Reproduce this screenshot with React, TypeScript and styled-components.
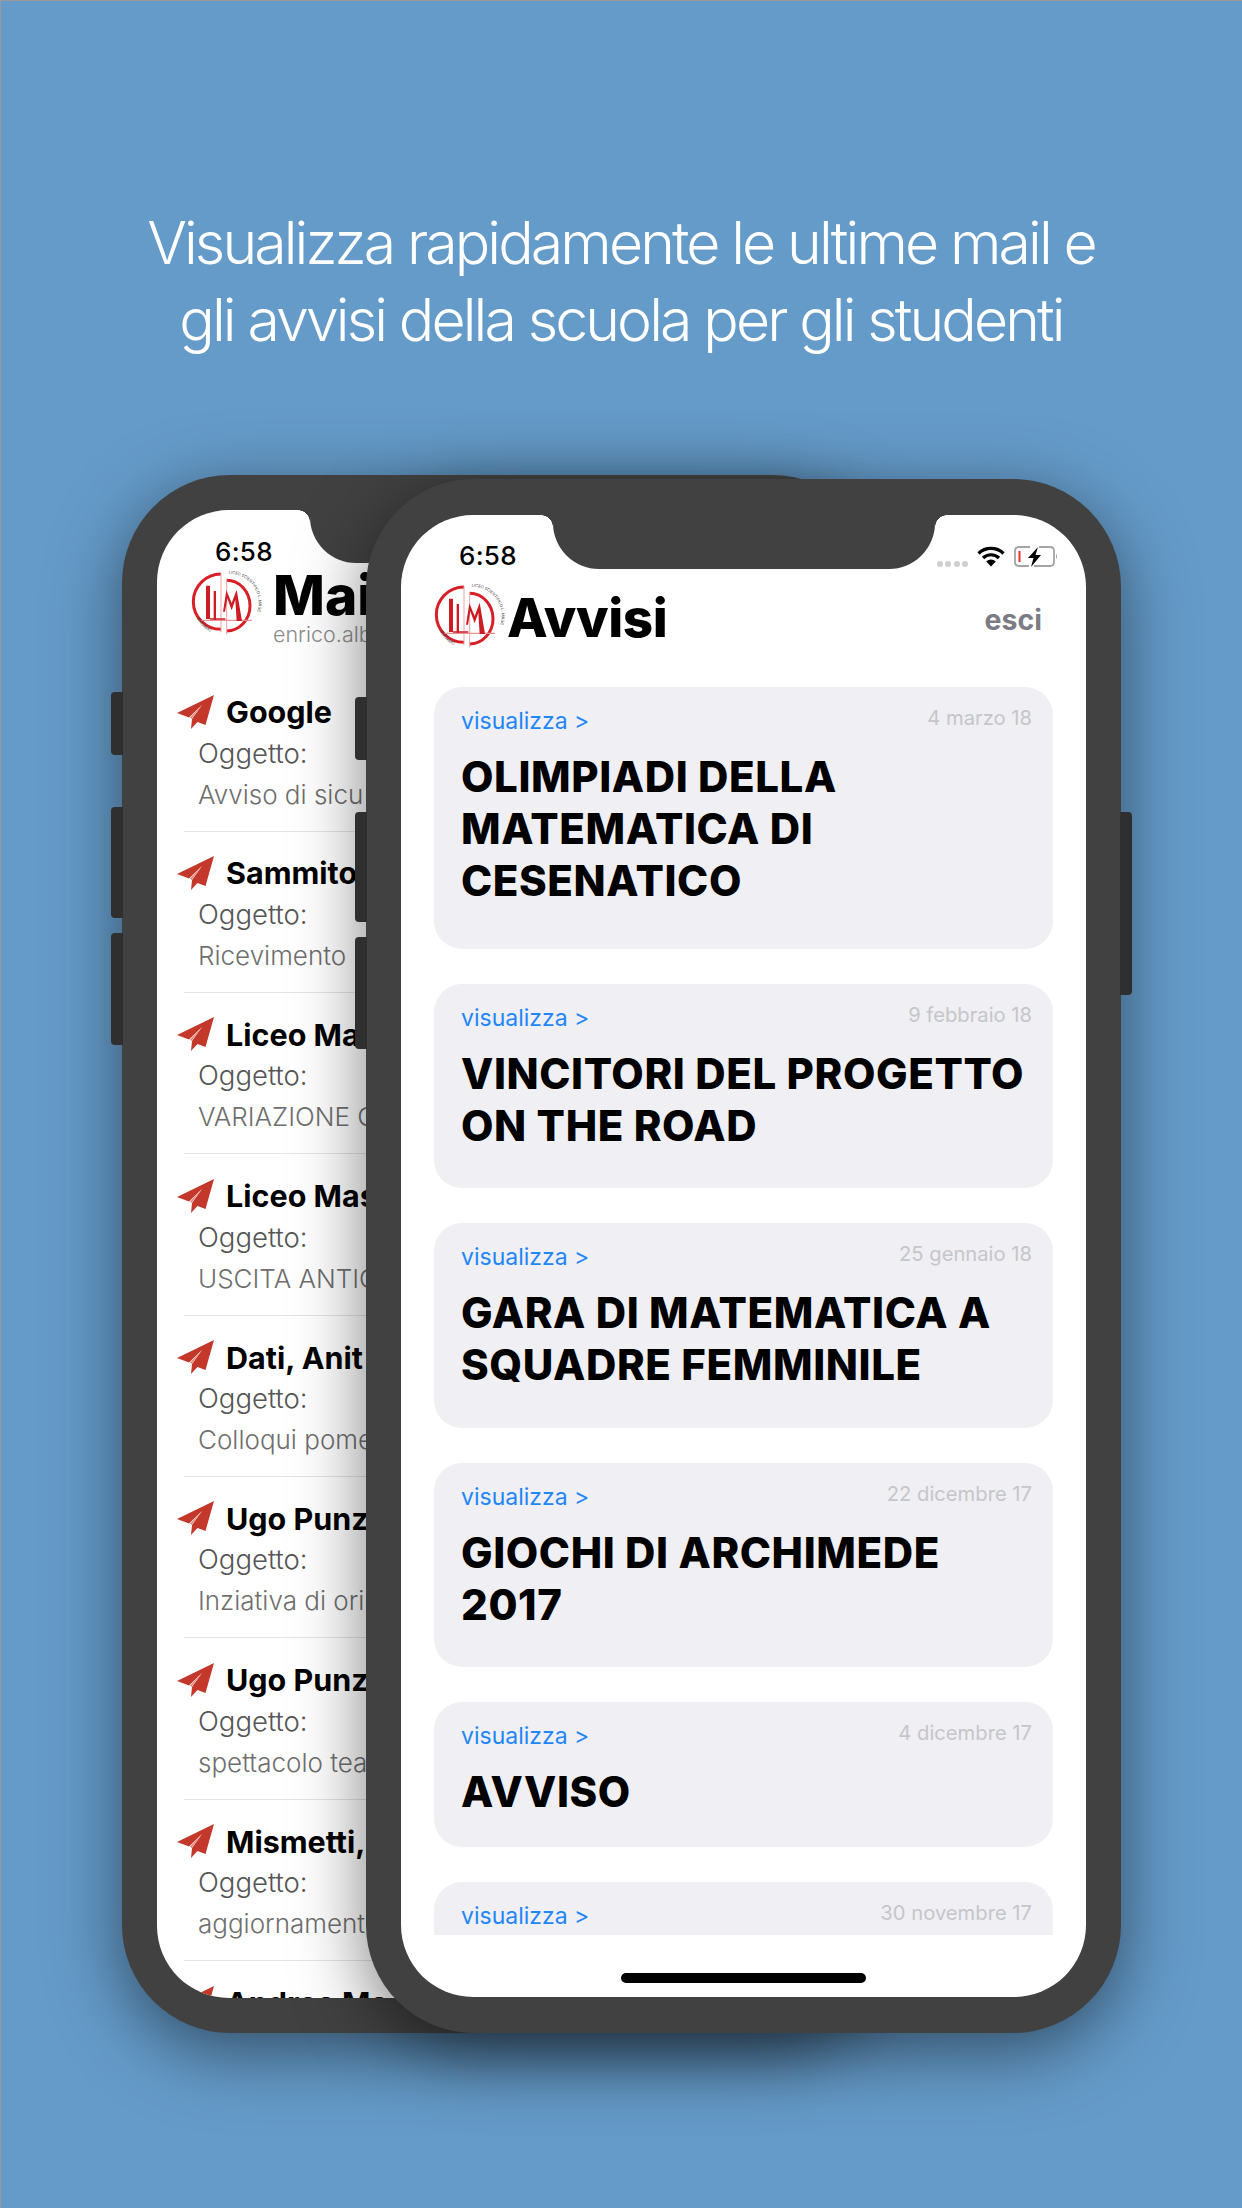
import styled, { createGlobalStyle } from 'styled-components'

const GlobalStyle = createGlobalStyle`
  html, body {
    margin: 0;
    padding: 0;
    background: #659bc9;
  }
  * {
    box-sizing: border-box;
  }
`

const Page = styled.div`
  width: 1242px;
  height: 2208px;
  overflow: hidden;
  background: #659bc9;
  box-shadow: inset 1px 1px 0 #9a9a9a;
  font-family: Inter, 'Noto Sans', sans-serif;
`

const Headline = styled.h1`
  margin: 0;
  padding-top: 204px;
  height: 475px;
  font-size: 59px;
  line-height: 77px;
  font-weight: 300;
  letter-spacing: -2.9px;
  color: #fff;
  text-align: center;
`

const Stage = styled.div`
  display: flex;
  align-items: flex-start;
  padding-left: 122px;
`

const Phone = styled.div<{ $front?: boolean }>`
  position: relative;
  flex: none;
  width: ${(p) => (p.$front ? '755px' : '758px')};
  height: ${(p) => (p.$front ? '1554px' : '1558px')};
  margin-left: ${(p) => (p.$front ? '-514px' : '0')};
  margin-top: ${(p) => (p.$front ? '4px' : '0')};
  padding: ${(p) => (p.$front ? '36px 35px' : '35px')};
  border-radius: 108px;
  background: #414141;
  box-shadow: 0 18px 70px rgba(0, 0, 0, 0.5);
`

const SideButton = styled.span<{ $top: number; $height: number; $right?: boolean }>`
  position: absolute;
  top: ${(p) => p.$top}px;
  height: ${(p) => p.$height}px;
  width: 12px;
  background: #2f2f2f;
  ${(p) =>
    p.$right
      ? 'right: -11px; border-radius: 0 4px 4px 0;'
      : 'left: -11px; border-radius: 4px 0 0 4px;'}
`

const Screen = styled.div`
  position: relative;
  display: flex;
  flex-direction: column;
  height: 100%;
  overflow: hidden;
  border-radius: 72px;
  background: #fff;
`

const Notch = styled.div<{ $left: number; $height: number }>`
  position: absolute;
  top: 0;
  left: ${(p) => p.$left}px;
  width: 382px;
  height: ${(p) => p.$height}px;
  background: #414141;
  border-radius: 0 0 46px 46px;

  &::before,
  &::after {
    content: '';
    position: absolute;
    top: 0;
    width: 12px;
    height: 12px;
  }
  &::before {
    left: -12px;
    background: radial-gradient(circle at 0 100%, transparent 11.5px, #414141 12px);
  }
  &::after {
    right: -12px;
    background: radial-gradient(circle at 100% 100%, transparent 11.5px, #414141 12px);
  }
`

const StatusBar = styled.div<{ $height: number; $top: number }>`
  position: relative;
  flex: none;
  display: flex;
  align-items: flex-start;
  justify-content: space-between;
  height: ${(p) => p.$height}px;
  padding: ${(p) => p.$top}px 28px 0 58px;
`

const Time = styled.span`
  font-size: 26px;
  line-height: 30px;
  font-weight: 500;
  letter-spacing: 0.3px;
  color: #000;
`

const StatusIcons = styled.div`
  display: flex;
  align-items: center;
  gap: 9px;
  margin-top: 5px;
`

const SignalDots = styled.div`
  display: flex;
  gap: 2.5px;
  margin-top: 14px;
`

const SignalDot = styled.span`
  width: 6px;
  height: 6px;
  border-radius: 50%;
  background: #cfcfcf;
`

const HeaderRow = styled.header`
  flex: none;
  display: flex;
  align-items: flex-start;
  height: 70px;
  padding-left: 30px;
`

const BrandTitle = styled.div`
  margin-top: 4px;
  font-size: 53px;
  line-height: 64px;
  font-weight: 800;
  letter-spacing: -0.4px;
  color: #000;
`

const Logout = styled.a`
  margin: 20px 44px 0 auto;
  font-size: 28.5px;
  line-height: 36px;
  font-weight: 700;
  color: #7c7c85;
`

const BackHeader = styled.header`
  flex: none;
  display: flex;
  align-items: flex-start;
  height: 122.5px;
  padding: 1px 0 0 31px;
`

const BackTitles = styled.div`
  margin: -1.5px 0 0 9px;
`

const BackTitle = styled.div`
  font-size: 55px;
  line-height: 55px;
  font-weight: 800;
  color: #000;
`

const BackSubtitle = styled.div`
  font-size: 21.5px;
  line-height: 23px;
  font-weight: 300;
  color: #8d8d8d;
  white-space: nowrap;
`

const MailList = styled.div`
  flex: 1;
  overflow: hidden;
  padding-left: 20px;
`

const MailRow = styled.div`
  height: 161.4px;
  white-space: nowrap;
`

const MailSender = styled.div`
  display: flex;
  align-items: center;
  gap: 12px;
  height: 42px;
  font-size: 30.5px;
  font-weight: 700;
  color: #000;
`

const MailLine = styled.div<{ $light?: boolean }>`
  height: 41px;
  padding-left: 21px;
  font-size: ${(p) => (p.$light ? '26px' : '27.5px')};
  line-height: 41px;
  font-weight: 300;
  color: ${(p) => (p.$light ? '#6f6f6f' : '#555')};
`

const MailDivider = styled.div`
  margin: 16px 0 0 7px;
  height: 1px;
  background: #e4e4e4;
`

const CardList = styled.div`
  flex: 1;
  display: flex;
  flex-direction: column;
  gap: 35px;
  min-height: 0;
  overflow: hidden;
  margin-top: 35px;
  padding: 0 33px;
`

const Card = styled.article<{ $height: number }>`
  flex: none;
  height: ${(p) => p.$height}px;
  padding: 18px 21px 0 27px;
  border-radius: 28px;
  background: #efeff4;
`

const CardMeta = styled.div`
  display: flex;
  align-items: flex-start;
  justify-content: space-between;
  height: 46px;
`

const ViewLink = styled.a`
  margin-top: 2px;
  font-size: 23px;
  line-height: 28px;
  font-weight: 400;
  color: #1f86fb;
`

const CardDate = styled.span`
  font-size: 20.2px;
  line-height: 26px;
  color: #c6c6ca;
`

const CardTitle = styled.h2`
  margin: 0;
  font-size: 42px;
  line-height: 52px;
  font-weight: 800;
  letter-spacing: 0.6px;
  color: #000;
`

const HomeArea = styled.div`
  flex: none;
  display: flex;
  justify-content: center;
  height: 62px;
  padding-top: 38px;
`

const HomeBar = styled.span`
  width: 245px;
  height: 10px;
  border-radius: 5px;
  background: #000;
`

const PlaneSvg = styled.svg`
  flex: none;
  width: 37px;
  height: 34px;
`

const LogoSvg = styled.svg`
  flex: none;
  width: 76px;
  height: 70px;
`

const Plane = () => (
  <PlaneSvg viewBox="0 0 37 34">
    <path
      d="M37 0 L0 18 L12 22.5 L25 10 L15 24 L14 34 L20.5 27 L28.5 30 Z"
      fill="#c4382c"
    />
    <path d="M25 10 L13 22.5 L14.5 24 Z" fill="#e58a80" />
  </PlaneSvg>
)

const Logo = () => (
  <LogoSvg viewBox="0 0 228 210">
    <path d="M99 15 A 83 83 0 0 0 99 181" fill="none" stroke="#d81f27" strokeWidth="9" />
    <path d="M116 34 A 70 76 0 0 1 116 186" fill="none" stroke="#d81f27" strokeWidth="9" />
    <path d="M99 12 V 190 M116 30 V 196" stroke="#f2a3a5" strokeWidth="3" fill="none" />
    <path d="M40 154 H 192" stroke="#ee8f92" strokeWidth="3.5" fill="none" />
    <path d="M54 50 H 66 V 150 H 54 Z M77 66 H 84 V 152 H 77 Z" fill="#cc1c24" />
    <path d="M66 150 H 112" stroke="#cc1c24" strokeWidth="5" />
    <path
      d="M105 128 L115 64 L131 102 L146 62 L162 156 L146 156 L142 92 L131 124 L118 88 L111 128 Z"
      fill="#cc1c24"
    />
    <path id="ring-top" d="M122 14 A 88 88 0 0 1 208 128" fill="none" />
    <path id="ring-bottom" d="M26 148 A 92 92 0 0 0 104 198" fill="none" />
    <text fontSize="12" fontFamily="Inter, sans-serif" fill="#444">
      <textPath href="#ring-top">LICEO SCIENTIFICO L. MASCHERONI</textPath>
    </text>
    <text fontSize="12" fontFamily="Inter, sans-serif" fill="#444">
      <textPath href="#ring-bottom">BERGAMO</textPath>
    </text>
  </LogoSvg>
)

const Wifi = () => (
  <svg width="28" height="21" viewBox="0 0 28 21">
    <g fill="none" stroke="#000" strokeWidth="3.2">
      <path d="M1.5 7.5 A 18 18 0 0 1 26.5 7.5" />
      <path d="M6 12 A 11.5 11.5 0 0 1 22 12" />
    </g>
    <path d="M9.2 15.4 A 7 7 0 0 1 18.8 15.4 L14 20.5 Z" fill="#000" />
  </svg>
)

const Battery = () => (
  <svg width="44" height="21" viewBox="0 0 44 21">
    <path
      d="M16 1 H 5 Q 1 1 1 5 V 16 Q 1 20 5 20 H 15 M 25 1 H 36 Q 40 1 40 5 V 16 Q 40 20 36 20 H 20"
      fill="none"
      stroke="#a4a4a4"
      strokeWidth="1.8"
    />
    <rect x="4.5" y="5" width="2" height="11" fill="#f0302c" />
    <path d="M24 1 L14 12 H 19.5 L 17 21 L 27 9 H 21.5 Z" fill="#000" />
    <path d="M42 7.5 Q 44 10.5 42 13.5 Z" fill="#a4a4a4" />
  </svg>
)

const mails = [
  { sender: 'Google', preview: 'Avviso di sicu' },
  { sender: 'Sammito', preview: 'Ricevimento' },
  { sender: 'Liceo Ma', preview: 'VARIAZIONE O' },
  { sender: 'Liceo Mas', preview: 'USCITA ANTIC' },
  { sender: 'Dati, Anit', preview: 'Colloqui pome' },
  { sender: 'Ugo Punz', preview: 'Inziativa di ori' },
  { sender: 'Ugo Punz', preview: 'spettacolo tea' },
  { sender: 'Mismetti,', preview: 'aggiornament' },
  { sender: 'Andrea Ma', preview: '' },
]

const notices = [
  { date: '4 marzo 18', height: 262, title: ['OLIMPIADI DELLA', 'MATEMATICA DI', 'CESENATICO'] },
  { date: '9 febbraio 18', height: 204, title: ['VINCITORI DEL PROGETTO', 'ON THE ROAD'] },
  { date: '25 gennaio 18', height: 205, title: ['GARA DI MATEMATICA A', 'SQUADRE FEMMINILE'] },
  { date: '22 dicembre 17', height: 204, title: ['GIOCHI DI ARCHIMEDE', '2017'] },
  { date: '4 dicembre 17', height: 145, title: ['AVVISO'] },
  { date: '30 novembre 17', height: 145, title: [] },
]

const App = () => (
  <Page>
    <GlobalStyle />
    <Headline>
      Visualizza rapidamente le ultime mail e
      <br />
      gli avvisi della scuola per gli studenti
    </Headline>
    <Stage>
      <Phone>
        <SideButton $top={217} $height={63} />
        <SideButton $top={332} $height={111} />
        <SideButton $top={458} $height={112} />
        <Screen>
          <Notch $left={153} $height={53} />
          <StatusBar $height={58} $top={27}>
            <Time>6:58</Time>
          </StatusBar>
          <BackHeader>
            <Logo />
            <BackTitles>
              <BackTitle>Mail</BackTitle>
              <BackSubtitle>enrico.alb</BackSubtitle>
            </BackTitles>
          </BackHeader>
          <MailList>
            {mails.map((mail, i) => (
              <MailRow key={i}>
                <MailSender>
                  <Plane />
                  {mail.sender}
                </MailSender>
                <MailLine>Oggetto:</MailLine>
                <MailLine $light>{mail.preview}</MailLine>
                <MailDivider />
              </MailRow>
            ))}
          </MailList>
        </Screen>
      </Phone>
      <Phone $front>
        <SideButton $top={218} $height={63} />
        <SideButton $top={333} $height={110} />
        <SideButton $top={458} $height={112} />
        <SideButton $right $top={333} $height={183} />
        <Screen>
          <Notch $left={152} $height={54} />
          <StatusBar $height={67} $top={26}>
            <Time>6:58</Time>
            <StatusIcons>
              <SignalDots>
                <SignalDot />
                <SignalDot />
                <SignalDot />
                <SignalDot />
              </SignalDots>
              <Wifi />
              <Battery />
            </StatusIcons>
          </StatusBar>
          <HeaderRow>
            <Logo />
            <BrandTitle>Avvisi</BrandTitle>
            <Logout>esci</Logout>
          </HeaderRow>
          <CardList>
            {notices.map((notice) => (
              <Card key={notice.date} $height={notice.height}>
                <CardMeta>
                  <ViewLink>visualizza &gt;</ViewLink>
                  <CardDate>{notice.date}</CardDate>
                </CardMeta>
                <CardTitle>
                  {notice.title.map((line) => (
                    <div key={line}>{line}</div>
                  ))}
                </CardTitle>
              </Card>
            ))}
          </CardList>
          <HomeArea>
            <HomeBar />
          </HomeArea>
        </Screen>
      </Phone>
    </Stage>
  </Page>
)

export default App
